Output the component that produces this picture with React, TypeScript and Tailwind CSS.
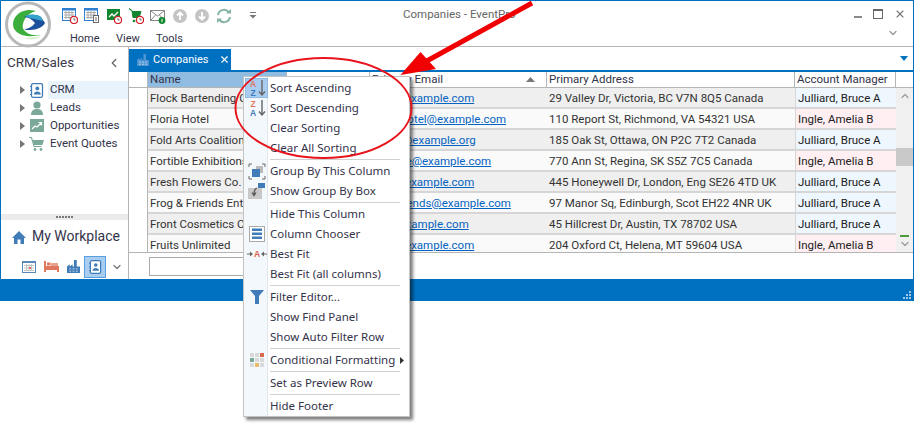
import React from 'react';
import { ChevronDown, ChevronLeft, ChevronUp, X } from 'lucide-react';

interface Company {
  name: string;
  email: string;
  address: string;
  manager: string;
}

const companies: Company[] = [
  { name: 'Flock Bartending Co.', email: 'info@example.com', address: '29 Valley Dr, Victoria, BC V7N 8Q5 Canada', manager: 'Julliard, Bruce A' },
  { name: 'Floria Hotel', email: 'floriahotel@example.com', address: '110 Report St, Richmond, VA 54321 USA', manager: 'Ingle, Amelia B' },
  { name: 'Fold Arts Coalition', email: 'sales@example.org', address: '185 Oak St, Ottawa, ON P2C 7T2 Canada', manager: 'Julliard, Bruce A' },
  { name: 'Fortible Exhibitions', email: 'fortible@example.com', address: '770 Ann St, Regina, SK S5Z 7C5 Canada', manager: 'Ingle, Amelia B' },
  { name: 'Fresh Flowers Co.', email: 'info@example.com', address: '445 Honeywell Dr, London, Eng SE26 4TD UK', manager: 'Julliard, Bruce A' },
  { name: 'Frog & Friends Enterprises', email: 'frogfriends@example.com', address: '97 Manor Sq, Edinburgh, Scot EH22 4NR UK', manager: 'Julliard, Bruce A' },
  { name: 'Front Cosmetics Co.', email: 'art@example.com', address: '45 Hillcrest Dr, Austin, TX 78702 USA', manager: 'Julliard, Bruce A' },
  { name: 'Fruits Unlimited', email: 'info@example.com', address: '204 Oxford Ct, Helena, MT 59604 USA', manager: 'Ingle, Amelia B' },
];

const Clock = () => (
  <g>
    <circle cx="12" cy="12" r="3.6" fill="#fff" stroke="#d0202a" strokeWidth="1.3" />
    <path d="M12 10v2h1.6" stroke="#444" strokeWidth="0.8" fill="none" />
  </g>
);

const CalendarGrid = ({ x = 0, y = 0, w = 13, h = 12 }: { x?: number; y?: number; w?: number; h?: number }) => (
  <g>
    <rect x={x + 0.5} y={y + 0.5} width={w} height={h} fill="#fff" stroke="#2f7fd0" />
    <rect x={x} y={y} width={w + 1} height="2.5" fill="#2f7fd0" />
    <path
      d={`M${x + 2} ${y + 4.5}H${x + w - 1}M${x + 2} ${y + 7}H${x + w - 1}M${x + 2} ${y + 9.5}H${x + w - 1}M${x + 4} ${y + 3}V${y + 11}M${x + 7} ${y + 3}V${y + 11}M${x + 10} ${y + 3}V${y + 11}`}
      stroke="#aaa"
      strokeWidth="1"
    />
  </g>
);

const Factory = ({ size, color }: { size: number; color: string }) => (
  <svg width={size} height={size} viewBox="0 0 14 14">
    <path d="M0 14V7l3-2.5V7l3-2.5V7h1.5V0h3v7H14v7z" fill={color} />
    <path d="M2.5 9.5h2M6 9.5h2M9.5 9.5h2M2.5 12h2M6 12h2M9.5 12h2" stroke="#fff" strokeOpacity="0.75" />
  </svg>
);

const ToolbarIcons = () => (
  <div className="flex items-center gap-[6px] pt-[7px]">
    <svg width="16" height="16" viewBox="0 0 16 16">
      <CalendarGrid />
      <Clock />
    </svg>
    <svg width="16" height="16" viewBox="0 0 16 16">
      <CalendarGrid />
      <rect x="9.5" y="7.5" width="5" height="7" fill="#fff" stroke="#666" />
      <path d="M11 10h2M11 12h2" stroke="#666" />
    </svg>
    <svg width="16" height="16" viewBox="0 0 16 16">
      <rect x="1" y="1" width="13" height="11" fill="#12852f" />
      <path d="M3 9l3-3 2 2 4-4" stroke="#fff" strokeWidth="1.3" fill="none" />
      <Clock />
    </svg>
    <svg width="16" height="16" viewBox="0 0 16 16">
      <path d="M1 0.5l3 2 1 7h6l2-6H4.5z" fill="#12852f" stroke="#12852f" />
      <circle cx="6" cy="13" r="1.3" fill="#12852f" />
      <Clock />
    </svg>
    <svg width="16" height="16" viewBox="0 0 16 16">
      <rect x="0.5" y="2.5" width="14" height="10" fill="#fff" stroke="#888" />
      <path d="M1 3l6.5 5L14 3M1 12l4.5-5M14 12l-4.5-5" stroke="#888" fill="none" />
      <circle cx="12" cy="12.5" r="3.4" fill="#12852f" />
      <path d="M12 10.8v3.4" stroke="#fff" />
    </svg>
    <svg width="16" height="16" viewBox="0 0 16 16">
      <circle cx="8" cy="8" r="7" fill="#c4c4c4" />
      <path d="M8 12V5M5 7.5L8 4.5l3 3" stroke="#fff" strokeWidth="1.8" fill="none" />
    </svg>
    <svg width="16" height="16" viewBox="0 0 16 16">
      <circle cx="8" cy="8" r="7" fill="#c4c4c4" />
      <path d="M8 4v7M5 8.5l3 3 3-3" stroke="#fff" strokeWidth="1.8" fill="none" />
    </svg>
    <svg width="16" height="16" viewBox="0 0 16 16">
      <path d="M2 7a6 6 0 0 1 10.5-3M14 9a6 6 0 0 1-10.5 3" stroke="#86b3a3" strokeWidth="2" fill="none" />
      <path d="M10 5.5h5V1zM6 10.5H1V15z" fill="#86b3a3" />
    </svg>
    <svg className="ml-[7px]" width="16" height="16" viewBox="0 0 16 16">
      <path d="M5 4.5h6" stroke="#777" strokeWidth="1" />
      <path d="M4.5 7h7L8 10.5z" fill="#777" />
    </svg>
  </div>
);

const Logo = () => (
  <svg width="48" height="47" viewBox="0 0 48 47" className="shrink-0">
    <circle cx="24" cy="23.5" r="21.5" fill="#fff" stroke="#b7b9b8" strokeWidth="3" />
    <path d="M24 9C14 10 9 17 9 23c0 7 6 11 14 12 5 .5 10 0 14-1-6 .5-12 0-15-3-3-2-4-5-3-8 1-5 5-11 13-13-3-1-6-1-8-1z" fill="#3cae3c" />
    <path d="M20 16c5-3 12-3 17 0l4 6c-2 4-8 7-15 7-3 0-4 0-6-1 4 0 8-2 11-6-3-4-7-6-11-6z" fill="#1c4f9c" />
    <path d="M21 15c5-2 12-2 16 1l2 4-13-3z" fill="#33a3c9" />
    <path d="M20 37c5 2 11 2 16-1-5 .5-11 .5-16 1z" fill="#d7ebc8" />
  </svg>
);

const TreeArrow = () => (
  <svg width="5" height="8" viewBox="0 0 5 8" className="shrink-0">
    <path d="M0 0l5 4-5 4z" fill="#777" />
  </svg>
);

const ContactIcon = ({ size = 14 }: { size?: number }) => (
  <svg width={size} height={size + 1} viewBox="0 0 14 15">
    <rect x="1.5" y="0.7" width="11" height="13.6" rx="1.5" fill="#fff" stroke="#3f7cb8" strokeWidth="1.3" />
    <circle cx="7.3" cy="5.4" r="1.9" fill="#3f7cb8" />
    <path d="M3.8 11.5c0-4 7-4 7 0z" fill="#3f7cb8" />
    <path d="M0 3.5h2M0 7.5h2M0 11.5h2" stroke="#3f7cb8" />
  </svg>
);

const navItems = [
  {
    label: 'CRM',
    icon: <ContactIcon />,
    active: true,
  },
  {
    label: 'Leads',
    icon: (
      <svg width="14" height="14" viewBox="0 0 14 14">
        <circle cx="7" cy="4" r="3.6" fill="#7ba999" />
        <path d="M1 14c0-5 3-6 6-6s6 1 6 6z" fill="#7ba999" />
      </svg>
    ),
  },
  {
    label: 'Opportunities',
    icon: (
      <svg width="14" height="14" viewBox="0 0 14 14">
        <rect width="14" height="13" fill="#7ba999" />
        <path d="M2 10l3-3 2 1 4-4M8.5 3.5H11.5V6.5" stroke="#fff" strokeWidth="1.2" fill="none" />
      </svg>
    ),
  },
  {
    label: 'Event Quotes',
    icon: (
      <svg width="15" height="14" viewBox="0 0 15 14">
        <path d="M0 0.5h2.5l2.5 9h7.5" stroke="#7ba999" strokeWidth="1.1" fill="none" />
        <path d="M3.5 3H15l-1.5 5H5z" fill="#7ba999" />
        <circle cx="6" cy="12.5" r="1.4" fill="#7ba999" />
        <circle cx="12" cy="12.5" r="1.4" fill="#7ba999" />
      </svg>
    ),
  },
];

const Sidebar = () => (
  <div className="w-[128px] shrink-0 flex flex-col border-r border-[#b5b5b5]">
    <div className="flex items-center justify-between h-[31px] mb-[3px] pl-[6px] pr-[7px]">
      <span className="text-[13.5px] text-[#3a3a4a] font-['Roboto',sans-serif]">CRM/Sales</span>
      <ChevronLeft size={14} strokeWidth={2.2} className="text-[#666]" />
    </div>
    <div className="flex flex-col">
      {navItems.map((item) => (
        <div key={item.label} className="flex items-center h-[18px] pl-[19px]">
          <TreeArrow />
          <div className="w-[23px] flex justify-center">{item.icon}</div>
          <div className={`flex-1 flex items-center h-[18px] pl-[2px] text-[11.5px] text-[#33334a] font-['Roboto',sans-serif] ${item.active ? 'bg-[#e9f3fb]' : ''}`}>
            {item.label}
          </div>
        </div>
      ))}
    </div>
    <div className="flex-1" />
    <div className="h-[6px] bg-[#ebebeb] flex items-center justify-center gap-[1px]">
      {[0, 1, 2, 3, 4, 5].map((i) => (
        <span key={i} className="w-[2px] h-[2px] bg-[#777]" />
      ))}
    </div>
    <div className="flex items-center gap-[6px] h-[34px] pl-[11px]">
      <svg width="14" height="13" viewBox="0 0 14 13">
        <path d="M7 0L0 7h2v6h3.5V8.5h3V13H12V7h2z" fill="#3f7cb8" />
      </svg>
      <span className="text-[14px] text-[#33334a] whitespace-nowrap -mt-px font-['Roboto',sans-serif]">My Workplace</span>
    </div>
    <div className="h-[25px] flex items-center pl-[21px]">
      <svg width="14" height="12" viewBox="0 0 14 12">
        <rect x="0.5" y="0.5" width="13" height="11" fill="#fff" stroke="#5a8ab8" />
        <rect x="0" y="0" width="14" height="2" fill="#5a8ab8" />
        <path d="M2 4.5h10M2 7h10M2 9.5h10M4.5 3v7M7 3v7M9.5 3v7" stroke="#c4c4c4" />
        <rect x="7" y="6" width="2" height="2" fill="#d86a5a" />
      </svg>
      <svg width="15" height="12" viewBox="0 0 15 12" className="ml-[8px]">
        <path d="M0 0h2v5h13v6h-2V9H2v2H0z" fill="#e0785f" />
        <rect x="3" y="1.5" width="3.5" height="3" fill="#e0785f" />
        <path d="M7 2h7v3H7z" fill="#e9a08d" />
      </svg>
      <div className="ml-[8px]">
        <Factory size={13} color="#3f7cb8" />
      </div>
      <div className="ml-[4px] w-[22px] h-[22px] bg-[#a9cdf0] border border-[#5a9fdf] flex items-center justify-center">
        <ContactIcon size={13} />
      </div>
      <ChevronDown size={12} strokeWidth={2.6} className="text-[#777] ml-[5px]" />
    </div>
  </div>
);

const HeaderCell = ({ label, className, sort }: { label: string; className: string; sort?: boolean }) => (
  <div className={`flex items-center justify-between px-[2px] border-r border-[#b5b5b5] text-[#33334a] ${className}`}>
    <span className="whitespace-nowrap mt-px">{label}</span>
    {sort && (
      <svg width="9" height="5" viewBox="0 0 9 5" className="mr-[9px]">
        <path d="M4.5 0L9 5H0z" fill="#777" />
      </svg>
    )}
  </div>
);

const Grid = () => (
  <div className="flex-1 flex min-h-0 text-[11.5px] text-[#333] font-['Roboto',sans-serif]">
    <div className="w-[19px] shrink-0 border-r border-[#b5b5b5]">
      <div className="h-[16px] border-b border-[#b5b5b5]" />
    </div>
    <div className="flex-1 flex flex-col min-w-0">
      <div className="flex h-[16px] shrink-0 border-b border-[#b5b5b5]">
        <HeaderCell label="Name" className="w-[139px] bg-[#8fbce0]" />
        <HeaderCell label="" className="w-[83px]" />
        <HeaderCell label="Primary Email" className="w-[177px]" sort />
        <HeaderCell label="Primary Address" className="w-[248px]" />
        <HeaderCell label="Account Manager" className="w-[101px]" />
      </div>
      <div className="h-[164px] overflow-hidden">
        {companies.map((c, i) => (
          <div key={c.name} className={`flex h-[21px] border-b-2 border-[#d6d6d6] ${i % 2 === 0 ? 'bg-[#efefef]' : 'bg-[#fafafa]'}`}>
            <div className="w-[139px] shrink-0 pl-[2px] leading-[20px] whitespace-nowrap overflow-hidden">{c.name}</div>
            <div className="w-[83px] shrink-0" />
            <div className="w-[177px] shrink-0 pl-[5px] leading-[20px] whitespace-nowrap overflow-hidden">
              <span className="text-[#0563c1] underline">{c.email}</span>
            </div>
            <div className="w-[248px] shrink-0 pl-[2px] leading-[20px] whitespace-nowrap overflow-hidden">{c.address}</div>
            <div
              className={`w-[101px] shrink-0 pl-[2px] leading-[20px] whitespace-nowrap border-l border-[#d6d6d6] text-[#222] ${
                c.manager.startsWith('Ingle') ? 'bg-[#ffeff2]' : 'bg-[#eef6fe]'
              }`}
            >
              {c.manager}
            </div>
          </div>
        ))}
      </div>
    </div>
    <div className="w-[17px] shrink-0 flex flex-col items-center bg-[#f0f0f0]">
      <div className="h-[16px] w-full bg-white border-b border-[#b5b5b5]" />
      <ChevronUp size={12} strokeWidth={2.4} className="text-[#999] mt-[2px]" />
      <div className="w-full h-[18px] bg-[#c9c9c9] mt-[46px]" />
      <div className="flex-1" />
      <div className="w-[9px] h-[2px] bg-[#4f9a3f] mb-[1px]" />
      <ChevronDown size={12} strokeWidth={2.4} className="text-[#999] mb-[2px]" />
    </div>
  </div>
);

const SortGlyph = ({ top, bottom, topColor, bottomColor }: { top: string; bottom: string; topColor: string; bottomColor: string }) => (
  <svg width="20" height="20" viewBox="0 0 20 20" className="font-['Liberation_Sans',sans-serif]">
    <text x="6" y="8.5" textAnchor="middle" fontSize="8.5" fontWeight="700" fill={topColor}>{top}</text>
    <text x="6" y="18" textAnchor="middle" fontSize="8.5" fontWeight="700" fill={bottomColor}>{bottom}</text>
    <path d="M15 2v15M12 13.5l3 3.5 3-3.5" stroke="#666" strokeWidth="1.4" fill="none" />
  </svg>
);

type MenuEntry = { label: string; icon?: React.ReactNode; hot?: boolean; sub?: boolean } | 'sep';

const menu: MenuEntry[] = [
  { label: 'Sort Ascending', hot: true, icon: <SortGlyph top="A" bottom="Z" topColor="#e0785f" bottomColor="#3f7cb8" /> },
  { label: 'Sort Descending', icon: <SortGlyph top="Z" bottom="A" topColor="#e0785f" bottomColor="#3f7cb8" /> },
  { label: 'Clear Sorting' },
  { label: 'Clear All Sorting' },
  'sep',
  {
    label: 'Group By This Column',
    icon: (
      <svg width="18" height="17" viewBox="0 0 18 17">
        <path d="M1 4V1h3M14 1h3v3M17 13v3h-3M4 16H1v-3" stroke="#666" fill="none" />
        <rect x="8" y="3" width="7" height="7" fill="#bbb" />
        <rect x="4" y="6" width="8" height="8" fill="#3f7cb8" />
      </svg>
    ),
  },
  {
    label: 'Show Group By Box',
    icon: (
      <svg width="18" height="16" viewBox="0 0 18 16">
        <rect x="0" y="5" width="14" height="11" fill="#c9c9c9" />
        <rect x="10" y="0" width="7" height="5" fill="#3f7cb8" />
        <path d="M9 5Q6 6 6 12M4 9.5l2 3 2-3" stroke="#555" strokeWidth="1.3" fill="none" />
      </svg>
    ),
  },
  'sep',
  { label: 'Hide This Column' },
  {
    label: 'Column Chooser',
    icon: (
      <svg width="16" height="16" viewBox="0 0 16 16">
        <rect x="0.5" y="0.5" width="15" height="15" fill="#fff" stroke="#aaa" />
        <path d="M3 2.5h10v2.5H3zM3 6.5h10V9H3zM3 10.5h10V13H3z" fill="#3f7cb8" />
      </svg>
    ),
  },
  {
    label: 'Best Fit',
    icon: (
      <svg width="20" height="10" viewBox="0 0 20 10" className="font-['Liberation_Sans',sans-serif]">
        <text x="10" y="8" textAnchor="middle" fontSize="8.5" fontWeight="700" fill="#e0604a">A</text>
        <path d="M0 5h5M15 5h5" stroke="#666" />
        <path d="M3 2.5L6 5 3 7.5zM17 2.5L14 5l3 2.5z" fill="#666" />
      </svg>
    ),
  },
  { label: 'Best Fit (all columns)' },
  'sep',
  {
    label: 'Filter Editor...',
    icon: (
      <svg width="14" height="14" viewBox="0 0 14 14">
        <path d="M0 0h14L9 6v8H5V6z" fill="#3f7cb8" />
      </svg>
    ),
  },
  { label: 'Show Find Panel' },
  { label: 'Show Auto Filter Row' },
  'sep',
  {
    label: 'Conditional Formatting',
    sub: true,
    icon: (
      <svg width="14" height="14" viewBox="0 0 14 14">
        <path d="M0 0h4v4H0zM5 0h4v4H5zM0 10h4v4H0zM10 5h4v4h-4zM5 5h4v4H5z" fill="#d9d9d9" />
        <rect x="0" y="5" width="4" height="4" fill="#7ba999" />
        <rect x="10" y="0" width="4" height="4" fill="#d86a4a" />
        <rect x="5" y="10" width="4" height="4" fill="#e8bc6a" />
        <rect x="10" y="10" width="4" height="4" fill="#d9d9d9" />
      </svg>
    ),
  },
  'sep',
  { label: 'Set as Preview Row' },
  'sep',
  { label: 'Hide Footer' },
];

const ContextMenu = () => (
  <div className="absolute left-[243px] top-[76px] w-[167px] h-[341px] bg-white border border-[#c4c4c4] py-px shadow-[3px_3px_3px_rgba(0,0,0,0.5)] text-[11.5px] text-[#33334a]">
    <div className="absolute left-0 top-0 bottom-0 w-[24px] bg-[#f3f8fc] border-r border-[#e0e6ec]" />
    <div className="relative">
      {menu.map((entry, i) =>
        entry === 'sep' ? (
          <div key={i} className="h-[3px] flex items-center pl-[26px] pr-[9px]">
            <div className="w-full h-px bg-[#d0d0d0]" />
          </div>
        ) : (
          <div key={entry.label} className="flex items-center h-5">
            <div className={`w-[23px] h-5 ml-px shrink-0 flex items-center justify-center ${entry.hot ? 'bg-[#a9cdf0] border border-[#8fbce0]' : ''}`}>
              {entry.icon}
            </div>
            <span className="ml-[2px] whitespace-nowrap">{entry.label}</span>
            {entry.sub && (
              <svg width="4" height="7" viewBox="0 0 4 7" className="ml-[5px]">
                <path d="M0 0l4 3.5L0 7z" fill="#333" />
              </svg>
            )}
          </div>
        ),
      )}
    </div>
  </div>
);

const Annotation = () => (
  <svg className="absolute left-0 top-0 pointer-events-none" width="914" height="425" viewBox="0 0 914 425">
    <ellipse cx="323.5" cy="108" rx="88" ry="50" fill="none" stroke="#e8141c" strokeWidth="2" />
    <path d="M532 3L425 62" stroke="#f00000" strokeWidth="5" />
    <path d="M400.5 75L420.5 52 436 69z" fill="#f00000" />
  </svg>
);

export default function App() {
  return (
    <div className="relative w-[914px] h-[425px] overflow-hidden bg-white font-['Noto_Sans','Open_Sans',sans-serif]">
      <div className="h-[301px] flex flex-col border-x border-t border-[#0070c0]">
        <div className="h-[46px] shrink-0 flex pl-[3px] border-b border-[#b5b5b5] relative">
          <Logo />
          <div className="flex flex-col flex-1">
            <div className="pl-[10px]">
              <ToolbarIcons />
            </div>
            <div className="flex pl-[18px] mt-[7px] text-[11px] text-[#33334a] font-['Roboto',sans-serif]">
              <span className="w-[46px]">Home</span>
              <span className="w-[40px]">View</span>
              <span>Tools</span>
            </div>
          </div>
          <div className="w-[66px] shrink-0 flex flex-col items-end pr-[7px] pt-[7px] gap-[7px]">
            <div className="flex items-center gap-[11px]">
              <div className="w-[8px] h-[2px] bg-[#8a8a8a] mt-[5px]" />
              <div className="w-[10px] h-[10px] border border-[#666] border-t-2" />
              <X size={12} strokeWidth={2.2} className="text-[#777]" />
            </div>
            <ChevronDown size={12} strokeWidth={2.6} className="text-[#999] mr-[7px]" />
          </div>
          <div className="absolute left-[402px] top-[5px] text-[11.5px] text-[#666] font-['Roboto',sans-serif]">Companies - EventPro</div>
        </div>
        <div className="flex-1 flex min-h-0">
          <Sidebar />
          <div className="flex-1 flex flex-col min-w-0">
            <div className="h-[25px] shrink-0 flex justify-between border-b-2 border-[#0070c0] pt-[2px]">
              <div className="w-[102px] h-[21px] bg-[#0070c0] text-white text-[11px] flex items-center pl-[8px] font-['Roboto',sans-serif]">
                <Factory size={12} color="#4e94d4" />
                <span className="ml-[4px] mt-px">Companies</span>
                <X size={11} strokeWidth={2.4} className="ml-[10px]" />
              </div>
              <svg width="8" height="5" viewBox="0 0 8 5" className="mt-[7px] mr-[5px]">
                <path d="M0 0h8L4 5z" fill="#0070c0" />
              </svg>
            </div>
            <Grid />
            <div className="h-[27px] shrink-0 border-t border-[#b5b5b5] pl-[20px] pt-[4px]">
              <div className="w-[100px] h-[19px] border border-[#aaa] bg-white" />
            </div>
          </div>
        </div>
        <div className="h-[22px] shrink-0 bg-[#0070c0] flex items-end justify-end pr-[2px] pb-[2px]">
          <div className="grid grid-cols-3 gap-[1px] w-[8px]">
            {[0, 1, 2, 3, 4, 5, 6, 7, 8].map((i) => (
              <span key={i} className={`w-[2px] h-[2px] ${i === 0 || i === 1 || i === 3 ? 'bg-transparent' : 'bg-[#9cc7e8]'}`} />
            ))}
          </div>
        </div>
      </div>
      <ContextMenu />
      <Annotation />
    </div>
  );
}
